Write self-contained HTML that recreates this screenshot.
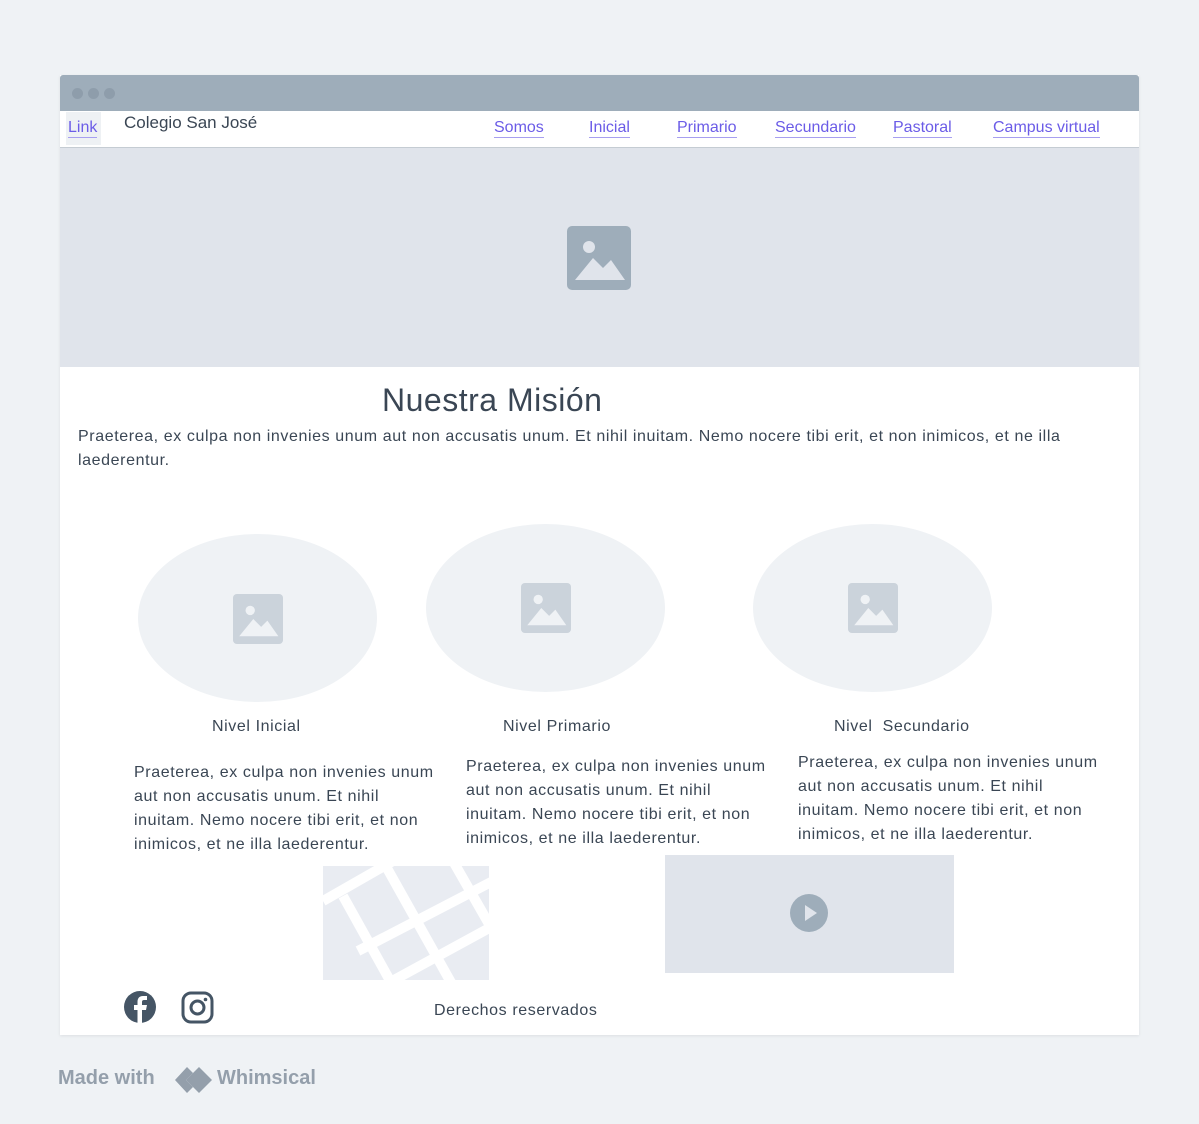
<!DOCTYPE html>
<html><head><meta charset="utf-8"><style>
body{margin:0;width:1199px;height:1124px;background:#eff2f5;font-family:"Liberation Sans",sans-serif;color:#3a4654;position:relative;overflow:hidden}
.a{position:absolute}
.win{left:60px;top:75px;width:1079px;height:960px;background:#fff;box-shadow:0 1px 3px rgba(0,0,0,.08)}
.bar{left:60px;top:75px;width:1079px;height:36px;background:#9eadba;border-radius:3px 3px 0 0}
.dot{width:11px;height:11px;border-radius:50%;background:#8e9dab;top:88px}
.nav a{position:absolute;top:118px;color:#6b5ce7;font-size:16px;text-decoration:none;border-bottom:1px solid #a79ff0;line-height:19px}
.t{font-size:16px;line-height:24px;white-space:nowrap;letter-spacing:0.6px}
.circ{background:#eff2f5;border-radius:50%}
</style></head><body>
<div class="a win"></div>
<div class="a bar"></div>
<div class="a dot" style="left:72px"></div><div class="a dot" style="left:88px"></div><div class="a dot" style="left:104px"></div>
<div class="a" style="left:66px;top:112px;width:35px;height:33px;background:#eef1f4"></div>
<div class="nav">
<a style="left:68px">Link</a>
<a style="left:494px">Somos</a><a style="left:589px">Inicial</a><a style="left:677px">Primario</a><a style="left:775px">Secundario</a><a style="left:893px">Pastoral</a><a style="left:993px">Campus virtual</a>
</div>
<div class="a" style="left:124px;top:113px;font-size:17px">Colegio San José</div>
<div class="a" style="left:60px;top:147px;width:1079px;height:1px;background:#c5ccd3"></div>
<div class="a" style="left:60px;top:148px;width:1079px;height:219px;background:#e0e4eb"></div>
<svg class="a" style="left:567px;top:226px" width="64" height="64" viewBox="0 0 64 64"><rect width="64" height="64" rx="5" fill="#9eadba"/><circle cx="22" cy="21" r="6" fill="#e0e4eb"/><path d="M8 54 L26 32 L36 42 L44 34 L58 54 Z" fill="#e0e4eb"/></svg>
<div class="a" style="left:382px;top:382px;font-size:32px;letter-spacing:0.5px">Nuestra Misión</div>
<div class="a t" style="left:78px;top:425px">Praeterea, ex culpa non invenies unum aut non accusatis unum. Et nihil inuitam. Nemo nocere tibi erit, et non inimicos, et ne illa<br>laederentur.</div>
<div class="a circ" style="left:138px;top:534px;width:239px;height:168px"></div>
<div class="a circ" style="left:426px;top:524px;width:239px;height:168px"></div>
<div class="a circ" style="left:753px;top:524px;width:239px;height:168px"></div>
<svg class="a" style="left:233px;top:594px" width="50" height="50" viewBox="0 0 64 64"><rect width="64" height="64" rx="5" fill="#cbd3db"/><circle cx="22" cy="21" r="6" fill="#eff2f5"/><path d="M8 54 L26 32 L36 42 L44 34 L58 54 Z" fill="#eff2f5"/></svg>
<svg class="a" style="left:521px;top:583px" width="50" height="50" viewBox="0 0 64 64"><rect width="64" height="64" rx="5" fill="#cbd3db"/><circle cx="22" cy="21" r="6" fill="#eff2f5"/><path d="M8 54 L26 32 L36 42 L44 34 L58 54 Z" fill="#eff2f5"/></svg>
<svg class="a" style="left:848px;top:583px" width="50" height="50" viewBox="0 0 64 64"><rect width="64" height="64" rx="5" fill="#cbd3db"/><circle cx="22" cy="21" r="6" fill="#eff2f5"/><path d="M8 54 L26 32 L36 42 L44 34 L58 54 Z" fill="#eff2f5"/></svg>
<div class="a t" style="left:212px;top:715px">Nivel Inicial</div>
<div class="a t" style="left:503px;top:715px">Nivel Primario</div>
<div class="a t" style="left:834px;top:715px">Nivel&nbsp; Secundario</div>
<div class="a t" style="left:134px;top:761px">Praeterea, ex culpa non invenies unum<br>aut non accusatis unum. Et nihil<br>inuitam. Nemo nocere tibi erit, et non<br>inimicos, et ne illa laederentur.</div>
<div class="a t" style="left:466px;top:755px">Praeterea, ex culpa non invenies unum<br>aut non accusatis unum. Et nihil<br>inuitam. Nemo nocere tibi erit, et non<br>inimicos, et ne illa laederentur.</div>
<div class="a t" style="left:798px;top:751px">Praeterea, ex culpa non invenies unum<br>aut non accusatis unum. Et nihil<br>inuitam. Nemo nocere tibi erit, et non<br>inimicos, et ne illa laederentur.</div>
<svg class="a" style="left:323px;top:866px" width="166" height="114" viewBox="0 0 166 114"><rect width="166" height="114" fill="#e9ecf2"/><g stroke="#fff" stroke-width="10" fill="none"><path d="M0 35 L70 -5"/><path d="M20 30 L70 120"/><path d="M60 -5 L130 120"/><path d="M130 -5 L170 65"/><path d="M35 85 L170 15"/><path d="M60 120 L170 60"/></g></svg>
<div class="a" style="left:665px;top:855px;width:289px;height:118px;background:#e0e4eb"></div>
<svg class="a" style="left:790px;top:894px" width="38" height="38"><circle cx="19" cy="19" r="19" fill="#9eadba"/><path d="M15 11 L27 19 L15 27Z" fill="#e0e4eb"/></svg>
<svg class="a" style="left:123px;top:990px" width="34" height="34" viewBox="0 0 34 34"><circle cx="17" cy="17" r="16" fill="#455565"/><path d="M19 34 V20 H23 L24 15 H19 V12 C19 10.5 19.7 10 21 10 H24 V6 H20 C16 6 14.5 8.5 14.5 12 V15 H11 V20 H14.5 V34Z" fill="#fff"/></svg>
<svg class="a" style="left:181px;top:991px" width="33" height="33" viewBox="0 0 33 33"><rect x="2" y="2" width="29" height="29" rx="8" fill="none" stroke="#455565" stroke-width="3"/><circle cx="16.5" cy="16.5" r="6.5" fill="none" stroke="#455565" stroke-width="3"/><circle cx="24.5" cy="8.5" r="1.8" fill="#455565"/></svg>
<div class="a t" style="left:434px;top:999px">Derechos reservados</div>
<div class="a" style="left:58px;top:1067px;font-size:20px;font-weight:bold;color:#949fab">Made with</div>
<svg class="a" style="left:172px;top:1065px" width="42" height="30" viewBox="0 0 42 30"><path d="M15 2 L3 15 L15 28 L21 22 L14 15 L21 8Z" fill="#949fab"/><path d="M27 2 L40 15 L27 28 L14 15Z" fill="#949fab"/></svg>
<div class="a" style="left:217px;top:1067px;font-size:20px;font-weight:bold;color:#949fab">Whimsical</div>
</body></html>
